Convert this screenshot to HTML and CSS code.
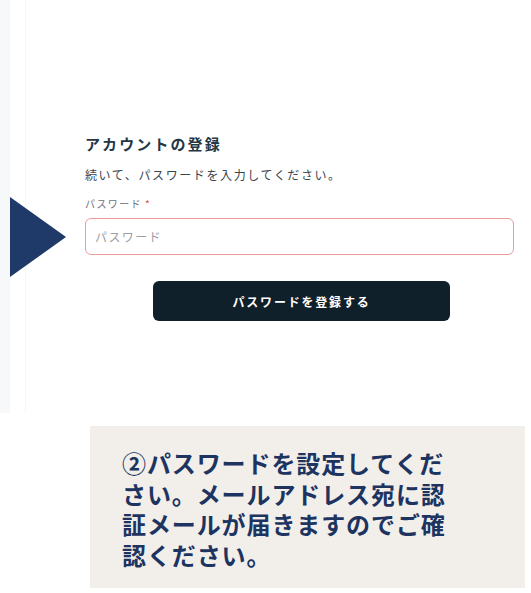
FILE: index.html
```html
<!DOCTYPE html>
<html lang="ja">
<head>
<meta charset="utf-8">
<title>アカウントの登録</title>
<link rel="stylesheet" href="styles.css">
</head>
<body>
<div class="shot">
  <div class="strip"></div>
  <div class="panel">
    <form class="form">
      <h1 class="title">アカウントの登録</h1>
      <p class="lead">続いて、パスワードを入力してください。</p>
      <label class="label" for="pw">パスワード<span class="req">*</span></label>
      <input class="input" id="pw" type="password" placeholder="パスワード">
      <button class="btn" type="button">パスワードを登録する</button>
    </form>
  </div>
  <svg class="arrow" width="56" height="80" viewBox="0 0 56 80"><polygon points="0,0 56,40 0,80" fill="#1f3a68"/></svg>
</div>
<div class="note">
  <p class="note-text">②パスワードを設定してください。メールアドレス宛に認証メールが届きますのでご確認ください。</p>
</div>
</body>
</html>
```

FILE: styles.css
```css
* { box-sizing: border-box; }
html, body { margin: 0; padding: 0; background: #ffffff; }
body { font-family: "Noto Sans CJK JP", "Noto Sans", sans-serif; }

.shot {
  position: relative;
  display: flex;
  height: 413px;
}
.strip {
  width: 10px;
  background: #f7f8fa;
}
.panel {
  flex: 1;
  display: flex;
  margin-left: 15px;
  border-left: 1px solid #f7f7f8;
}
.form {
  margin-left: 59px;
  width: 429px;
  padding-top: 134px;
  display: flex;
  flex-direction: column;
}
.title {
  margin: 0;
  font-size: 15px;
  line-height: 20px;
  font-weight: 700;
  letter-spacing: 2.1px;
  color: #243746;
}
.lead {
  margin: 13px 0 0;
  font-size: 12px;
  line-height: 16px;
  letter-spacing: 1.6px;
  color: #3a4650;
}
.label {
  margin-top: 14px;
  font-size: 10px;
  line-height: 14px;
  letter-spacing: 1.4px;
  color: #6c7178;
}
.req { color: #e04848; margin-left: 3px; }
.input {
  margin-top: 7px;
  height: 37px;
  border: 1px solid #ee9a9a;
  border-radius: 6px;
  padding: 0 9px;
  font-family: inherit;
  font-size: 12px;
  letter-spacing: 1.4px;
  color: #333;
  outline: none;
}
.input::placeholder { color: #9a9ea3; }
.btn {
  margin-top: 26px;
  align-self: center;
  width: 297px;
  height: 40px;
  margin-left: 4px;
  border: 0;
  border-radius: 6px;
  background: #10202b;
  color: #ffffff;
  font-family: inherit;
  font-size: 12px;
  font-weight: 700;
  letter-spacing: 1.8px;
}
.arrow {
  position: absolute;
  left: 10px;
  top: 197px;
}

.note {
  margin: 13px 0 0 90px;
  width: 435px;
  height: 162px;
  background: #f2efeb;
  padding: 22px 0 0 32px;
}
.note-text {
  margin: 0;
  width: 335px;
  font-size: 24px;
  line-height: 30.5px;
  font-weight: 700;
  letter-spacing: 0.9px;
  color: #1d3461;
}
```
